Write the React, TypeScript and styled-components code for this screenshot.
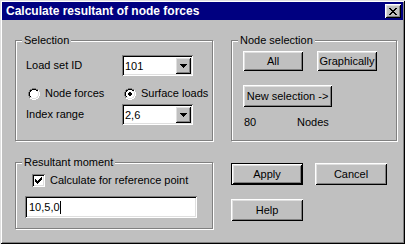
import React from 'react';
import styled, { createGlobalStyle } from 'styled-components';

const GlobalStyle = createGlobalStyle`
  html, body { margin: 0; padding: 0; background: #c0c0c0; }
  body { font-family: "Liberation Sans", Arial, sans-serif; font-size: 11px; color: #000; }
  * { box-sizing: border-box; }
`;

const Window = styled.div`
  width: 405px;
  height: 244px;
  padding: 2px;
  background: #c0c0c0;
  box-shadow: inset 1px 1px #dfdfdf, inset -1px -1px #000, inset 2px 2px #fff, inset -2px -2px #808080;
  display: flex;
  flex-direction: column;
`;

const TitleBar = styled.div`
  height: 18px;
  background: #000080;
  color: #fff;
  display: flex;
  align-items: center;
  padding: 0 2px 0 4px;
  font-weight: bold;
  font-size: 12px;
`;

const TitleText = styled.span`
  flex: 1;
  white-space: nowrap;
`;

const bevel = `box-shadow: inset 1px 1px #fff, inset -1px -1px #000, inset 2px 2px #dfdfdf, inset -2px -2px #808080;`;

const CloseButton = styled.button`
  width: 16px;
  height: 14px;
  padding: 0;
  margin: 0;
  border: 0;
  background: #c0c0c0;
  ${bevel}
  display: flex;
  align-items: center;
  justify-content: center;
`;

const PixelSvg = styled.svg`
  display: block;
  flex: none;
`;

const PixelArt = ({ rows, colors }: { rows: string[]; colors: Record<string, string> }) => {
  const w = rows[0].length;
  const h = rows.length;
  return (
    <PixelSvg width={w} height={h} viewBox={`0 0 ${w} ${h}`} shapeRendering="crispEdges">
      {rows.flatMap((r, y) =>
        r.split('').map((c, x) =>
          colors[c] ? <rect key={`${x}-${y}`} x={x} y={y} width={1} height={1} fill={colors[c]} /> : null
        )
      )}
    </PixelSvg>
  );
};

const X_ROWS = [
  'KK....KK',
  '.KK..KK.',
  '..KKKK..',
  '...KK...',
  '..KKKK..',
  '.KK..KK.',
  'KK....KK',
];

const ARROW_ROWS = ['KKKKKKK', '.KKKKK.', '..KKK..', '...K...'];

const CHECK_ROWS = [
  '......K',
  '.....KK',
  'K...KKK',
  'KK.KKK.',
  'KKKKK..',
  '.KKK...',
  '..K....',
];

const RADIO_ROWS = [
  '....GGGG....',
  '..GGKKKKGG..',
  '.GKKWWWWKKH.',
  '.GKWWWWWWLH.',
  'GKWWWWWWWWLH',
  'GKWWWWWWWWLH',
  'GKWWWWWWWWLH',
  'GKWWWWWWWWLH',
  '.GKWWWWWWLH.',
  '.GLLWWWWLLH.',
  '..HHLLLLHH..',
  '....HHHH....',
];

const RADIO_ON_ROWS = RADIO_ROWS.map((r, y) => {
  const dot = ['', '', '', '', '.DD.', 'DDDD', 'DDDD', '.DD.', '', '', '', ''][y];
  if (!dot) return r;
  const chars = r.split('');
  dot.split('').forEach((c, i) => {
    if (c === 'D') chars[4 + i] = 'D';
  });
  return chars.join('');
});

const RADIO_COLORS = { G: '#808080', K: '#000', W: '#fff', L: '#dfdfdf', H: '#fff', D: '#000' };

const Body = styled.div`
  display: flex;
  gap: 18px;
  padding: 20px 0 0 13px;
`;

const Column = styled.div<{ $w: number }>`
  width: ${(p) => p.$w}px;
  display: flex;
  flex-direction: column;
`;

const GroupBox = styled.div<{ $h: number; $gapBefore?: number }>`
  height: ${(p) => p.$h}px;
  margin-top: ${(p) => p.$gapBefore ?? 0}px;
  border: 1px solid #808080;
  box-shadow: 1px 1px 0 #fff, inset 1px 1px 0 #fff;
  display: flex;
  flex-direction: column;
  align-items: flex-start;
`;

const Legend = styled.div`
  height: 13px;
  line-height: 13px;
  margin: -7px 0 -6px 6px;
  padding: 0 2px;
  background: #c0c0c0;
  white-space: nowrap;
`;

const SelectionGrid = styled.div`
  display: grid;
  grid-template-columns: 96px 71px;
  grid-template-rows: 21px 28px 21px;
  align-items: center;
  padding: 14px 0 0 10px;
`;

const Label = styled.span`
  white-space: nowrap;
  line-height: 13px;
`;

const Field = styled.div<{ $w: number; $h: number }>`
  width: ${(p) => p.$w}px;
  height: ${(p) => p.$h}px;
  padding: 2px;
  background: #fff;
  display: flex;
  align-items: stretch;
  box-shadow: inset 1px 1px #808080, inset -1px -1px #fff, inset 2px 2px #000, inset -2px -2px #dfdfdf;
`;

const FieldValue = styled.div<{ $pad: number }>`
  flex: 1;
  display: flex;
  align-items: center;
  padding-left: ${(p) => p.$pad}px;
  background: #fff;
  white-space: nowrap;
`;

const DropButton = styled.div`
  width: 16px;
  background: #c0c0c0;
  ${bevel}
  display: flex;
  align-items: center;
  justify-content: center;
`;

const Caret = styled.span`
  display: inline-block;
  width: 1px;
  height: 13px;
  background: #000;
`;

const Combo = ({ value }: { value: string }) => (
  <Field $w={71} $h={21}>
    <FieldValue $pad={1}>{value}</FieldValue>
    <DropButton>
      <PixelArt rows={ARROW_ROWS} colors={{ K: '#000' }} />
    </DropButton>
  </Field>
);

const OptionRow = styled.label`
  display: flex;
  align-items: center;
  gap: 5px;
  height: 13px;
  line-height: 13px;
  white-space: nowrap;
`;

const RadioOption = styled(OptionRow)`
  align-self: start;
  margin: 11px 0 0 2px;
`;

const Radio = ({ checked, children }: { checked: boolean; children: React.ReactNode }) => (
  <RadioOption>
    <PixelArt rows={checked ? RADIO_ON_ROWS : RADIO_ROWS} colors={RADIO_COLORS} />
    <span>{children}</span>
  </RadioOption>
);

const CheckBox = styled.div`
  width: 13px;
  height: 13px;
  padding: 2px 0 0 2px;
  background: #fff;
  box-shadow: inset 1px 1px #808080, inset -1px -1px #fff, inset 2px 2px #000, inset -2px -2px #dfdfdf;
  display: flex;
  align-items: flex-start;
  justify-content: flex-start;
`;

const CheckMark = styled.div`
  padding: 1px 0 0 1px;
`;

const CheckRow = styled(OptionRow)`
  margin: 11px 0 0 16px;
`;

const MomentInput = styled(Field)`
  margin: 9px 0 0 9px;
`;

const NodeBody = styled.div`
  display: flex;
  flex-direction: column;
  align-items: flex-start;
  padding: 10px 0 0 11px;
`;

const ButtonRow = styled.div`
  display: flex;
  gap: 14px;
`;

const Button = styled.button<{ $w: number; $h: number; $default?: boolean; $top?: number }>`
  width: ${(p) => p.$w}px;
  height: ${(p) => p.$h}px;
  margin: ${(p) => p.$top ?? 0}px 0 0 0;
  padding: 0;
  background: #c0c0c0;
  color: #000;
  font-family: "Liberation Sans", Arial, sans-serif;
  font-size: 11px;
  border: ${(p) => (p.$default ? '1px solid #000' : '0')};
  ${bevel}
  display: flex;
  align-items: center;
  justify-content: center;
  white-space: nowrap;
`;

const CountRow = styled.div`
  display: grid;
  grid-template-columns: 53px auto;
  margin-top: 9px;
  padding-left: 1px;
  line-height: 13px;
`;

const ActionGrid = styled.div`
  display: grid;
  grid-template-columns: 72px 72px;
  grid-auto-rows: 22px;
  column-gap: 12px;
  row-gap: 14px;
  margin-top: 22px;
`;

export default function App() {
  return (
    <>
      <GlobalStyle />
      <Window>
        <TitleBar>
          <TitleText>Calculate resultant of node forces</TitleText>
          <CloseButton aria-label="Close">
            <PixelArt rows={X_ROWS} colors={{ K: '#000' }} />
          </CloseButton>
        </TitleBar>
        <Body>
          <Column $w={198}>
            <GroupBox $h={101}>
              <Legend>Selection</Legend>
              <SelectionGrid>
                <Label>Load set ID</Label>
                <Combo value="101" />
                <Radio checked={false}>Node forces</Radio>
                <Radio checked>Surface loads</Radio>
                <Label>Index range</Label>
                <Combo value="2,6" />
              </SelectionGrid>
            </GroupBox>
            <GroupBox $h={67} $gapBefore={21}>
              <Legend>Resultant moment</Legend>
              <CheckRow>
                <CheckBox>
                  <CheckMark>
                    <PixelArt rows={CHECK_ROWS} colors={{ K: '#000' }} />
                  </CheckMark>
                </CheckBox>
                <span>Calculate for reference point</span>
              </CheckRow>
              <MomentInput $w={172} $h={22}>
                <FieldValue $pad={2}>
                  10,5,0
                  <Caret />
                </FieldValue>
              </MomentInput>
            </GroupBox>
          </Column>
          <Column $w={166}>
            <GroupBox $h={101}>
              <Legend>Node selection</Legend>
              <NodeBody>
                <ButtonRow>
                  <Button $w={60} $h={20}>All</Button>
                  <Button $w={60} $h={20}>Graphically</Button>
                </ButtonRow>
                <Button $w={89} $h={22} $top={14}>{'New selection ->'}</Button>
                <CountRow>
                  <span>80</span>
                  <span>Nodes</span>
                </CountRow>
              </NodeBody>
            </GroupBox>
            <ActionGrid>
              <Button $w={72} $h={22} $default>Apply</Button>
              <Button $w={72} $h={22}>Cancel</Button>
              <Button $w={72} $h={22}>Help</Button>
            </ActionGrid>
          </Column>
        </Body>
      </Window>
    </>
  );
}
